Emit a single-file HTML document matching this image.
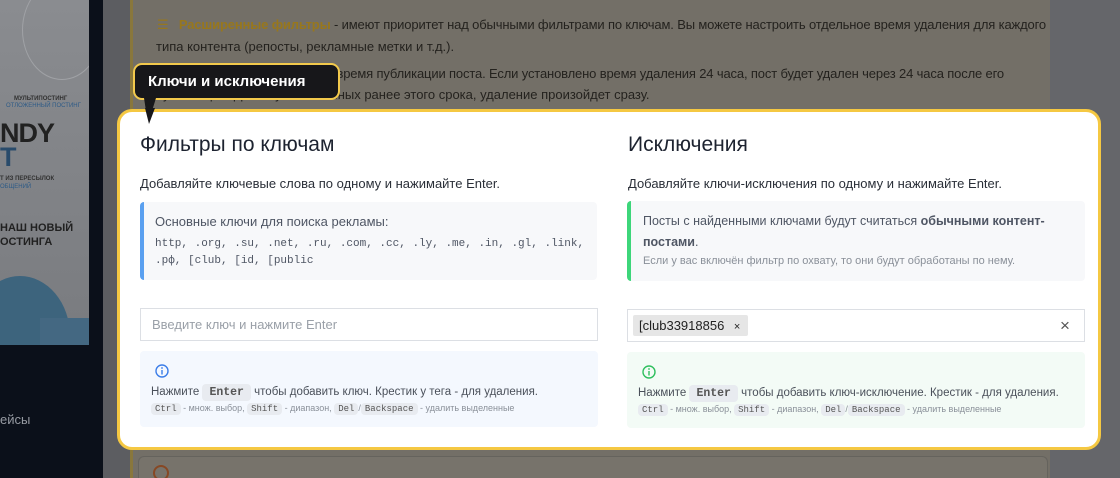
<!DOCTYPE html>
<html style="overflow:hidden;width:1120px;height:478px"><head><meta charset="utf-8"><style>
*{box-sizing:border-box;margin:0;padding:0}
body{width:1120px;height:478px;overflow:hidden;position:relative;background:#5e5f63;font-family:"Liberation Sans","DejaVu Sans",sans-serif;}
.mono{font-family:"Liberation Mono","DejaVu Sans Mono",monospace}
.abs{position:absolute;white-space:nowrap}
kbd{font-family:"Liberation Mono",monospace;background:#e8ebf0;border-radius:4px;padding:1px 4px;color:#555}
</style></head><body>
<div class="abs" style="left:0;top:0;width:103px;height:478px;background:#0c111b"></div>
<div class="abs" style="left:0;top:0;width:89px;height:345px;background:linear-gradient(#8d8f93,#7c7e82);overflow:hidden">
  <div class="abs" style="left:22px;top:-20px;width:80px;height:100px;border-radius:50%;border:1px solid #a4a6aa"></div>
  <div class="abs" style="left:14px;top:96px;font-size:6px;font-weight:bold;color:#333">МУЛЬТИПОСТИНГ</div>
  <div class="abs" style="left:6px;top:103px;font-size:6px;color:#2f5d8a">ОТЛОЖЕННЫЙ ПОСТИНГ</div>
  <div class="abs" style="left:0;top:118px;font-size:27px;font-weight:bold;color:#222;letter-spacing:-1px">NDY</div>
  <div class="abs" style="left:0;top:142px;font-size:27px;font-weight:bold;color:#2a4d6e">T</div>
  <div class="abs" style="left:0;top:176px;font-size:6px;font-weight:bold;color:#333">Т ИЗ ПЕРЕСЫЛОК</div>
  <div class="abs" style="left:0;top:184px;font-size:6px;color:#2f5d8a">ОБЩЕНИЙ</div>
  <div class="abs" style="left:0;top:222px;font-size:11px;font-weight:bold;color:#222">НАШ НОВЫЙ</div>
  <div class="abs" style="left:0;top:236px;font-size:11px;font-weight:bold;color:#222">ОСТИНГА</div>
  <div class="abs" style="left:-30px;top:276px;width:100px;height:120px;border-radius:50% 50% 0 0;background:#3f6680"></div>
  <div class="abs" style="left:40px;top:318px;width:60px;height:40px;background:#466b85"></div>
</div>
<div class="abs" style="left:0;top:412px;font-size:13px;color:#9a9ea6">ейсы</div>
<div class="abs" style="left:130px;top:0;width:920px;height:478px;background:#76726a;border-left:3px solid #8c7a3e"></div>
<div class="abs" style="left:1050px;top:0;width:70px;height:478px;background:#68696d"></div>
<div class="abs" style="left:157px;top:14px;font-size:13px;color:#25231f;line-height:22px;letter-spacing:-0.15px">
 <span style="color:#9b7a1e">☰</span>&nbsp;&nbsp; <b style="color:#9b7a1e">Расширенные фильтры</b> - имеют приоритет над обычными фильтрами по ключам. Вы можете настроить отдельное время удаления для каждого</div>
<div class="abs" style="left:156px;top:36px;font-size:13px;color:#25231f;line-height:22px">типа контента (репосты, рекламные метки и т.д.).</div>
<div class="abs" style="left:217px;top:63px;font-size:13px;color:#25231f;line-height:22px;letter-spacing:-0.15px">Система учитывает время публикации поста. Если установлено время удаления 24 часа, пост будет удален через 24 часа после его</div>
<div class="abs" style="left:156px;top:84px;font-size:13px;color:#25231f;line-height:22px">публикации. Для опубликованных ранее этого срока, удаление произойдет сразу.</div>
<div class="abs" style="left:138px;top:456px;width:910px;height:22px;border:1px solid #68655f;border-bottom:none;border-radius:6px 6px 0 0;background:#7a766e"></div>
<div class="abs" style="left:153px;top:465px;width:16px;height:16px;border:2px solid #8a4a25;border-radius:50%"></div>
<div class="abs" style="left:0;top:0;width:1120px;height:478px;background:rgba(0,0,0,0.02)"></div>
<div class="abs" style="left:133px;top:63px;width:207px;height:37px;background:#17171a;border:2px solid #f2c94c;border-radius:9px;color:#fff;font-weight:bold;font-size:15px;line-height:33px;padding-left:13px">Ключи и исключения</div>
<svg class="abs" style="left:140px;top:98px" width="20" height="28"><polygon points="4,0 16,0 8,26" fill="#17171a"/></svg>
<div class="abs" style="left:117px;top:109px;width:984px;height:341px;background:#fff;border:3px solid #f5c842;border-radius:15px"></div>
<svg class="abs" style="left:143px;top:108px" width="14" height="18"><polygon points="2,0 12,0 6,16" fill="#17171a"/></svg>
<div class="abs" style="left:140px;top:133px;font-size:21px;color:#1d2330">Фильтры по ключам</div>
<div class="abs" style="left:140px;top:176px;font-size:13px;color:#2a2f38">Добавляйте ключевые слова по одному и нажимайте Enter.</div>
<div class="abs" style="left:140px;top:202px;width:457px;height:78px;background:#f7f8fa;border-left:4px solid #5aa0f0;border-radius:4px;padding:12px 0 0 11px">
 <div style="font-size:13px;color:#4f5664">Основные ключи для поиска рекламы:</div>
 <div class="mono" style="font-size:11px;color:#4f5664;line-height:17px;margin-top:7px">http, .org, .su, .net, .ru, .com, .cc, .ly, .me, .in, .gl, .link,<br>.рф, [club, [id, [public</div>
</div>
<div class="abs" style="left:140px;top:308px;width:458px;height:33px;border:1px solid #dcdfe4;padding:8px 11px;font-size:13px;color:#9aa0a8">Введите ключ и нажмите Enter</div>
<div class="abs" style="left:140px;top:351px;width:458px;height:76px;background:#f4f8fe;border-radius:4px;padding:13px 11px 0">
 <svg width="14" height="14" style="margin-left:4px"><circle cx="7" cy="7" r="6" fill="none" stroke="#3b7de8" stroke-width="1.4"/><rect x="6.3" y="6" width="1.4" height="4.5" fill="#3b7de8"/><circle cx="7" cy="4" r=".9" fill="#3b7de8"/></svg>
 <div style="font-size:11.5px;color:#4a505a;margin-top:3px">Нажмите <kbd style="padding:2px 7px;font-weight:bold">Enter</kbd> чтобы добавить ключ. Крестик у тега - для удаления.</div>
 <div style="font-size:9px;color:#8a9099;margin-top:4px"><kbd>Ctrl</kbd> - множ. выбор, <kbd>Shift</kbd> - диапазон, <kbd>Del</kbd>/<kbd>Backspace</kbd> - удалить выделенные</div>
</div>
<div class="abs" style="left:628px;top:133px;font-size:21px;color:#1d2330">Исключения</div>
<div class="abs" style="left:628px;top:176px;font-size:13px;color:#2a2f38">Добавляйте ключи-исключения по одному и нажимайте Enter.</div>
<div class="abs" style="left:627px;top:201px;width:458px;height:80px;background:#f7f8fa;border-left:4px solid #3dd67a;border-radius:4px;padding:10px 0 0 12px">
 <div style="font-size:12.5px;color:#4f5664;line-height:21px">Посты с найденными ключами будут считаться <b>обычными контент-<br>постами</b>.</div>
 <div style="font-size:11px;color:#8a9099;margin-top:2px">Если у вас включён фильтр по охвату, то они будут обработаны по нему.</div>
</div>
<div class="abs" style="left:627px;top:309px;width:458px;height:33px;border:1px solid #dcdfe4"></div>
<div class="abs" style="left:633px;top:315px;width:115px;height:21px;background:#e6e6e6;border-radius:2px;font-size:13px;color:#222;line-height:21px;padding-left:6px">[club33918856 <span style="font-size:11px;margin-left:6px">×</span></div>
<div class="abs" style="left:1060px;top:316px;font-size:17px;color:#555">×</div>
<div class="abs" style="left:627px;top:352px;width:458px;height:76px;background:#f3fbf6;border-radius:4px;padding:13px 11px 0">
 <svg width="14" height="14" style="margin-left:4px"><circle cx="7" cy="7" r="6" fill="none" stroke="#2fbf5e" stroke-width="1.4"/><rect x="6.3" y="6" width="1.4" height="4.5" fill="#2fbf5e"/><circle cx="7" cy="4" r=".9" fill="#2fbf5e"/></svg>
 <div style="font-size:11.5px;color:#4a505a;margin-top:3px">Нажмите <kbd style="padding:2px 7px;font-weight:bold">Enter</kbd> чтобы добавить ключ-исключение. Крестик - для удаления.</div>
 <div style="font-size:9px;color:#8a9099;margin-top:4px"><kbd>Ctrl</kbd> - множ. выбор, <kbd>Shift</kbd> - диапазон, <kbd>Del</kbd>/<kbd>Backspace</kbd> - удалить выделенные</div>
</div>
</body></html>
